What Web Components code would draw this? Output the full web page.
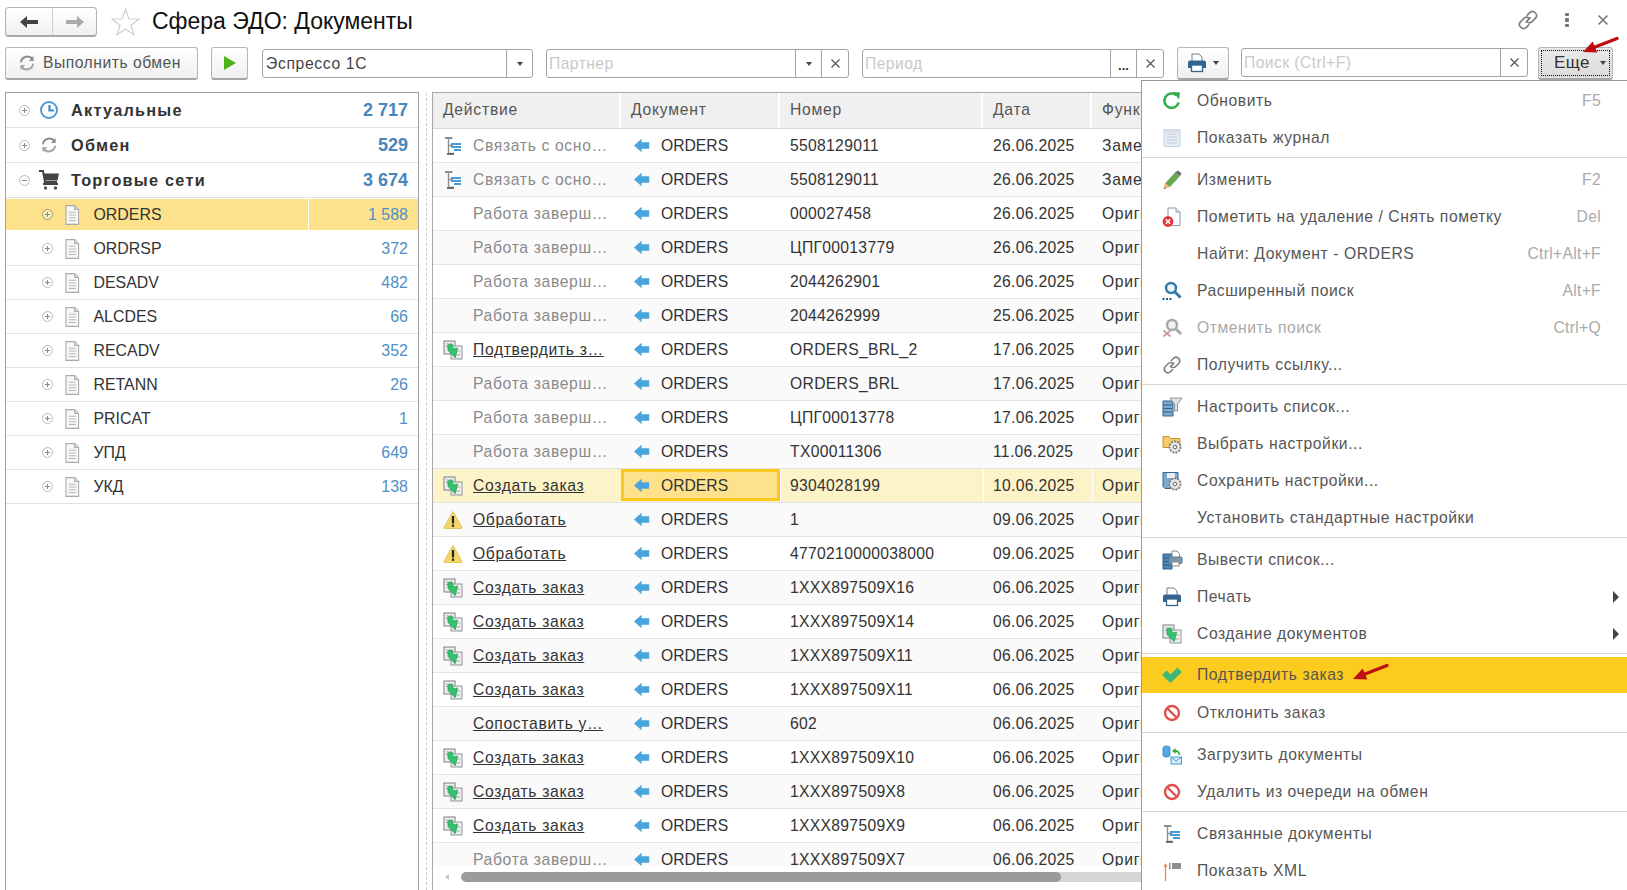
<!DOCTYPE html>
<html lang="ru"><head><meta charset="utf-8"><title>Сфера ЭДО: Документы</title>
<style>
html,body{margin:0;padding:0;background:#fff;font-family:"Liberation Sans",Arial,sans-serif;}
</style></head><body>
<edo-app></edo-app>
<script>
const S='fill="none" stroke-linecap="round" stroke-linejoin="round"';
const gear=(cx,cy)=>`<circle cx="${cx}" cy="${cy}" r="5.6" fill="#e8e8e8" stroke="#7d7d7d" stroke-width="1.8" stroke-dasharray="2 1.1"/><circle cx="${cx}" cy="${cy}" r="1.8" fill="#fff" stroke="#666" stroke-width="1"/>`;
const I={
clock:`<circle cx="10" cy="10" r="8" fill="#fff" stroke="#4d9ad6" stroke-width="2"/><path d="M10.5 5v5.5H15" fill="none" stroke="#3d8bcb" stroke-width="2.2"/>`,
sync:`<path d="M4 8.5A6.6 6.6 0 0 1 15.5 6" ${S} stroke="#8b8b8b" stroke-width="2"/><path d="M16.5 3v5h-4.6z" fill="#8b8b8b"/><path d="M16 11.5A6.6 6.6 0 0 1 4.5 14" ${S} stroke="#a5a5a5" stroke-width="2"/><path d="M3.5 17v-5h4.6z" fill="#a5a5a5"/>`,
cart:`<path d="M0 1h4l2 11h12" fill="none" stroke="#444" stroke-width="2"/><path d="M4.5 3.5H20l-1.500 7H6z" fill="#444"/><rect x="4" y="13" width="15" height="2" fill="#444"/><circle cx="6.500" cy="18" r="1.700" fill="#555"/><circle cx="16.500" cy="18" r="1.700" fill="#555"/>`,
doc:`<path d="M4.500 1.500h8l3.500 3.500v13.500H4.500z" fill="#f7f7f4" stroke="#aaa"/><path d="M12.500 1.500V5H16" fill="#ddd" stroke="#aaa"/><path d="M7 7.500h6.500M7 10h6.500M7 12.500h6.500M7 15h6.500" stroke="#b9b9b9"/>`,
tree:`<path d="M2 2h7.500" stroke="#8a8f94" stroke-width="2"/><path d="M5.500 2v15.500H11M5.500 9.500H10" fill="none" stroke="#8a8f94" stroke-width="1.400"/><path d="M8 8h10M8 11h10M11 14h7" stroke="#4a9ad6" stroke-width="2"/><path d="M4 18h7" stroke="#555" stroke-width="1.600"/>`,
left:`<path d="M0 10 8 3v3.500h8v7H8V17z" fill="#4aa5de"/>`,
create:`<rect x="1" y="1" width="11" height="13" fill="#eee" stroke="#7b7f82"/><rect x="8" y="6" width="11" height="13" fill="#eee" stroke="#8e9295"/><path d="M3 4h6M3 6.500h4M13 15h4M13 11h4" stroke="#aaa"/><path d="M6 4h4.500v5H15l-4.500 9L5 9.500z" transform="rotate(-12 10 10)" fill="#33c16b" stroke="#1f9a4f" stroke-width=".6"/>`,
warn:`<path d="M10 1.500 19 17.500a.8.8 0 0 1-.7 1H1.700a.8.8 0 0 1-.7-1z" fill="#f3d768" stroke="#e2c65a"/><rect x="8.900" y="6" width="2.200" height="7.500" fill="#222"/><rect x="8.900" y="14.600" width="2.200" height="2.200" fill="#222"/>`,
refresh:`<path d="M16.600 11.500A7.200 7.200 0 1 1 14.400 4.300" fill="none" stroke="#2fae4a" stroke-width="2.600"/><path d="M11 .8 18 1.500 17 8.400z" fill="#2fae4a"/>`,
journal:`<rect x="2" y="1.500" width="16" height="17" fill="#e6ecf3" stroke="#c5d0dc"/><path d="M5 6h10M5 9h10M5 12h10M5 15h10" stroke="#c0ccd8"/><rect x="2" y="1.500" width="16" height="3" fill="#d6dfe9"/>`,
pencil:`<path d="M13 2.500 18 6 8 17 3 13.500z" fill="#6aa84f"/><path d="M13 2.500 16 .6 19.600 3.600 18 6z" fill="#5e6a78"/><path d="M3 13.500 8 17 1.500 19z" fill="#f1b868"/><path d="M1.500 19 3 17.200 3.600 18.400z" fill="#333"/>`,
del:`<path d="M6 1h8l4 4v13.500H6z" fill="#fff" stroke="#8797a6"/><path d="M14 1v4h4" fill="#eef" stroke="#8797a6"/><circle cx="6" cy="14.500" r="5.400" fill="#e03a3e"/><path d="M3.800 12.300l4.400 4.400M8.200 12.300l-4.400 4.400" stroke="#fff" stroke-width="1.600"/>`,
search:`<circle cx="9" cy="7" r="5" fill="#eef5fa" stroke="#2f79ad" stroke-width="2.400"/><path d="M13 11l5.500 5.500" stroke="#2f79ad" stroke-width="3"/><path d="M.5 18h2M4 18h2M7.500 18h2" stroke="#1f5f8f" stroke-width="1.800"/>`,
cancel:`<circle cx="10" cy="7" r="5" fill="#f2f2f2" stroke="#a8a8a8" stroke-width="2.400"/><path d="M14 11l5 5" stroke="#aaa" stroke-width="3"/><path d="M1.500 12.500l7 6M8.500 12.500l-7 6" stroke="#cf9a9a" stroke-width="1.800"/>`,
link:`<path d="M8.300 11.700l3.600-3.600M9.300 5.500l2.400-2.400a3.700 3.700 0 0 1 5.200 5.200l-3 3a3.700 3.700 0 0 1-5 .2M10.700 14.500l-2.400 2.400a3.700 3.700 0 0 1-5.200-5.200l3-3a3.700 3.700 0 0 1 5-.2" ${S} stroke="#7f7f7f" stroke-width="1.500"/>`,
listset:`<path d="M1 4h10v15H1z" fill="#7ea9cf" stroke="#32658f"/><path d="M1 8h9M1 11.500h9M1 15h9" stroke="#32658f"/><path d="M8 1h12l-4.500 6v7h-3V7z" fill="#dfe3e6" stroke="#8c9399"/>`,
folderset:`<path d="M1 5V2.500h6l1.500 2H18v9H1z" fill="#f5cd6a" stroke="#c98f2e"/>${gear(13,13)}`,
saveset:`<path d="M1 1.500h15v16H3l-2-2z" fill="#7ea9cf" stroke="#32658f"/><rect x="5" y="2" width="8" height="5" fill="#e8eef5"/>${gear(13,13)}`,
printlist:`<path d="M1 4h9v15H1z" fill="#4f86b3" stroke="#2d5f89"/><path d="M1 8h9M1 11.500h9M1 15h9" stroke="#2d5f89"/><path d="M10 1h5l2.500 2.500V8H10z" fill="#fff" stroke="#888"/><rect x="7" y="7" width="13" height="6.500" rx="1" fill="#7c96ad" stroke="#5e7891"/><rect x="10" y="12" width="7" height="4" fill="#fff" stroke="#888"/>`,
printer:`<path d="M5 1h7l3 3v5H5z" fill="#fff" stroke="#6f7f8e"/><path d="M1 9.500a2 2 0 0 1 2-2h14a2 2 0 0 1 2 2V15h-3v-2H4v2H1z" fill="#33658f"/><rect x="4.500" y="12" width="11" height="6.500" fill="#fff" stroke="#33658f" stroke-width="1.300"/>`,
check:`<path d="M0 10 4.500 5.500 8.500 9.500 15.500 2.500 20 7 8.500 18z" fill="#3cb878"/>`,
ban:`<circle cx="10" cy="10" r="7" fill="none" stroke="#e2524b" stroke-width="2.400"/><path d="M5 5l10 10" stroke="#e2524b" stroke-width="2.400"/>`,
load:`<path d="M1 3a3.500 2 0 0 1 7 0v7a3.500 2 0 0 1-7 0z" fill="#57a9e3" stroke="#2f7fb8" stroke-width=".8"/><path d="M13.500 3 10 6l3.500 3V7c2 0 3 1 3 3h1.500c0-3-1.500-5-4.500-5z" fill="#33a83e"/><rect x="9" y="12" width="10.500" height="7" fill="#d6ecfa" stroke="#4a9ad6"/><path d="M9 12l5.200 4 5.300-4" fill="none" stroke="#4a9ad6"/>`,
xml:`<path d="M3.500 20V4" stroke="#e2895a" stroke-width="1.300"/><path d="M1.500 6 3.500 2l2 4z" fill="#e2895a"/><path d="M7 3h1.500M10 3h9M7 5h1.500M10 5h9M7 7h1.500M10 7h9" stroke="#222" stroke-width="1.200"/>`
};
function el(name,cls){customElements.define(name,cls);}
class Base extends HTMLElement{
  constructor(){super();this.attachShadow({mode:'open'});}
  a(n,d=''){return this.hasAttribute(n)?this.getAttribute(n):d;}
}
el('edo-icon',class extends Base{connectedCallback(){const s=this.a('size','20');
  this.shadowRoot.innerHTML=`<style>:host{display:inline-flex;width:${s}px;height:${s}px;flex:none}svg{display:block;width:100%;height:100%;overflow:visible}</style><svg viewBox="0 0 20 20" aria-hidden="true">${I[this.a('name')]||''}</svg>`;}});

el('edo-header',class extends Base{connectedCallback(){this.shadowRoot.innerHTML=`<style>
:host{display:flex;align-items:flex-start;height:47px;box-sizing:border-box;padding:7px 0 0 5px}
.nav{display:flex;width:92px;height:30px;box-sizing:border-box;border:1px solid #b4b4b4;border-bottom:2px solid #a8a8a8;border-radius:4px;background:linear-gradient(#fff,#f0f0f0)}
.nav div{flex:1;display:flex;align-items:center;justify-content:center}
.nav div:first-child{border-right:1px solid #cfcfcf;flex:0 0 46px}
.star{margin:1px 0 0 14px;width:29px;height:28px}
h1{margin:0 0 0 12px;font:400 23px/28px "Liberation Sans",Arial,sans-serif;color:#111;white-space:nowrap}
.sp{flex:1}
.r{display:flex;align-items:center;height:26px;margin-right:18px}
.r>*{display:block}
.dots{margin:0 28px 0 26px;width:4px;display:flex;flex-direction:column;gap:2px}
.dots i{width:4px;height:3.500px;background:#777;border-radius:1px}
</style>
<div class="nav"><div><svg width="18" height="14" viewBox="0 0 18 14"><path d="M0 7 7 1v4h11v4H7v4z" fill="#444"/></svg></div><div><svg width="18" height="14" viewBox="0 0 18 14"><path d="M18 7 11 1v4H0v4h11v4z" fill="#aaa"/></svg></div></div>
<svg class="star" viewBox="0 0 29 28"><path d="M14.500 1.500 18 11h10l-8 6.200 3 9.600-8.500-5.800L6 26.800l3-9.600L1 11h10z" fill="#fff" stroke="#cfcfcf" stroke-width="1.200"/></svg>
<h1><slot></slot></h1><div class="sp"></div>
<div class="r"><edo-icon name="link" size="22"></edo-icon><div class="dots"><i></i><i></i><i></i></div>
<svg width="12" height="12" viewBox="0 0 12 12"><path d="M1.500 1.500l9 9M10.500 1.500l-9 9" stroke="#7a7a7a" stroke-width="1.700"/></svg></div>`;}});

el('edo-button',class extends Base{connectedCallback(){const w=this.a('w'),f=this.hasAttribute('pressed'),st=this.hasAttribute('start');this.shadowRoot.innerHTML=`<style>
:host{display:inline-flex;flex:none;width:${w}px;height:33px;box-sizing:border-box;border:1px solid #b6b6b6;border-bottom:2px solid #a6a6a6;border-radius:3px;background:${f?'linear-gradient(#e9e9e9,#dcdcdc)':'linear-gradient(#fff,#efefef)'};align-items:center;justify-content:${st?'flex-start':'center'};${st?'padding-left:11px;':''}gap:6px;color:#555;font:15.700px "Liberation Sans",Arial,sans-serif;letter-spacing:.5px;white-space:nowrap}
.d{box-sizing:border-box;margin:2px;align-self:stretch;flex:1;border:1px dotted #111;display:flex;align-items:center;justify-content:center;gap:10px;font-size:17px;color:#333;padding-left:9px}
</style>${f?'<div class="d"><slot></slot></div>':'<slot></slot>'}`;}});

el('edo-drop',class extends Base{connectedCallback(){this.shadowRoot.innerHTML=`<style>:host{display:inline-block;width:0;height:0;border:3.500px solid transparent;border-top:4px solid ${this.a('c','#444')};border-bottom:0;flex:none}</style>`;}});

el('edo-field',class extends Base{connectedCallback(){const w=this.a('w'),b=this.a('btn','').split(' ').filter(Boolean),h=this.a('h','29'),ph=this.hasAttribute('ph');
 const bs=b.map(x=>{const n=x.split(':');
   const inner=n[0]=='drop'?'<edo-drop></edo-drop>':n[0]=='dots'?'<span class="dots">...</span>':'<svg width="11" height="11" viewBox="0 0 11 11"><path d="M1.500 1.500l8 8M9.500 1.500l-8 8" stroke="#555" stroke-width="1.200"/></svg>';
   return `<div class="b" style="width:${n[1]}px">${inner}</div>`}).join('');
 this.shadowRoot.innerHTML=`<style>
:host{display:inline-flex;flex:none;width:${w}px;height:${h}px;box-sizing:border-box;border:1px solid #a3a3a3;border-radius:3px;background:#fff;font:15.700px "Liberation Sans",Arial,sans-serif;letter-spacing:${ph?'.42px':'.65px'};color:${ph?'#c9c9c9':'#444'}}
.t{flex:1;padding-left:${ph?2:3}px;padding-top:1px;line-height:${h-3}px;white-space:nowrap;overflow:hidden}
.b{flex:none;box-sizing:border-box;border-left:1px solid #a3a3a3;display:flex;align-items:center;justify-content:center}
.dots{color:#333;font-weight:700;font-size:13px;margin-top:3px;letter-spacing:0}
</style><div class="t"><slot></slot></div>${bs}`;}});

el('edo-toolbar',class extends Base{connectedCallback(){this.shadowRoot.innerHTML=`<style>
:host{display:flex;align-items:center;height:33px;padding-left:5px}
slot{display:contents}
</style><slot></slot>`;}});

el('edo-tree-row',class extends Base{connectedCallback(){const top=this.a('level')=='0',sel=this.hasAttribute('selected'),open=this.hasAttribute('open');
 this.shadowRoot.innerHTML=`<style>
:host{display:flex;align-items:center;box-sizing:border-box;height:${sel?33:top?35:34}px;border-bottom:1px solid #e2e2e2;color:#333;font-family:"Liberation Sans",Arial,sans-serif;${sel?'background:#fde28b;border-bottom:2px solid #fff;margin-top:1px;':''}}
.e{width:11px;height:11px;box-sizing:border-box;border:1px solid #bbb;border-radius:50%;margin-left:${top?13:36}px;position:relative;flex:none;${sel?'border-color:#a89a60;background:#f6ecc8;':''}}
.e:before{content:"";position:absolute;left:2px;right:2px;top:4px;height:1px;background:#888}
.e.p:after{content:"";position:absolute;top:2px;bottom:2px;left:4px;width:1px;background:#888}
edo-icon{margin-left:${top?9:8}px}
.l{flex:1;white-space:nowrap;margin-left:${top?12:10.5}px;${top?'font-weight:700;font-size:16.300px;letter-spacing:1.250px;':'font-size:15.900px;'}}
.n{color:${top?'#4a85bd':'#4f8fc9'};height:100%;display:flex;align-items:center;justify-content:flex-end;padding-right:10px;${top?'font-weight:700;font-size:18px;':'font-size:16px;'}${sel?'width:110px;box-sizing:border-box;border-left:1px solid #fff;':''}}
</style><div class="e ${open?'':'p'}"></div><edo-icon name="${this.a('icon')}" size="${top?20:22}"></edo-icon><div class="l"><slot></slot></div><div class="n">${this.a('count')}</div>`;}});

el('edo-tree',class extends Base{connectedCallback(){this.shadowRoot.innerHTML=`<style>
:host{display:block;flex:none;width:414px;box-sizing:border-box;border:1px solid #a0a0a0;border-bottom:0;background:#fff;margin-top:-1px}
</style><slot></slot>`;}});

const COLS='188px 159px 203px 109px 300px';
el('edo-row',class extends Base{connectedCallback(){const k=this.a('kind'),sel=this.hasAttribute('selected'),alt=this.hasAttribute('alt');
 const ic=this.a('icon');
 this.shadowRoot.innerHTML=`<style>
:host{display:grid;grid-template-columns:${COLS};height:34px;box-sizing:border-box;border-bottom:1px solid #e4e4e4;background:${sel?'#fdf3c8':alt?'#fafafa':'#fff'};font:15.700px/33px "Liberation Sans",Arial,sans-serif;color:#333}
.c{white-space:nowrap;overflow:hidden;padding-left:10px;box-sizing:border-box;${sel?'box-shadow:inset 1px 0 #fff;':''}}
.a{display:flex;padding-left:10px;align-items:center;box-shadow:none}
.a span{margin-left:10px;letter-spacing:.65px;${k=='link'?'color:#333;text-decoration:underline;':'color:#8a8a8a;'}}
.a edo-icon{visibility:${ic?'visible':'hidden'}}
.d{display:flex;align-items:center;gap:8px;padding-left:13px;${sel?'background:#fde28b;box-sizing:border-box;border:3px solid #fcc81e;padding-left:10px;margin:0 0 1px 0;height:32px;box-shadow:none;':''}}
.n{letter-spacing:.3px}
.f{letter-spacing:.65px}
</style><div class="c a"><edo-icon name="${ic||'warn'}" size="20"></edo-icon><span>${this.a('action')}</span></div><div class="c d"><edo-icon name="left" size="19"></edo-icon><div>ORDERS</div></div><div class="c n">${this.a('num')}</div><div class="c n">${this.a('date')}</div><div class="c f">${this.a('fn')}</div>`;}});

const W='Работа заверш…',Z='Создать заказ',O='Обработать',D26='26.06.2025',D06='06.06.2025',D17='17.06.2025';
const rows=[
['Связать с осно…','g','tree','5508129011',D26,'Замена'],['Связать с осно…','g','tree','5508129011',D26,'Замена'],
[W,'g','','000027458',D26],[W,'g','','ЦПГ00013779',D26],[W,'g','','2044262901',D26],[W,'g','','2044262999','25.06.2025'],
['Подтвердить з…','link','create','ORDERS_BRL_2',D17],[W,'g','','ORDERS_BRL',D17],[W,'g','','ЦПГ00013778',D17],[W,'g','','ТХ00011306','11.06.2025'],
[Z,'link','create','9304028199','10.06.2025','Оригинал',1],[O,'link','warn','1','09.06.2025'],[O,'link','warn','4770210000038000','09.06.2025'],
[Z,'link','create','1XXX897509X16',D06],[Z,'link','create','1XXX897509X14',D06],[Z,'link','create','1XXX897509X11',D06],[Z,'link','create','1XXX897509X11',D06],
['Сопоставить у…','link','','602',D06],[Z,'link','create','1XXX897509X10',D06],[Z,'link','create','1XXX897509X8',D06],[Z,'link','create','1XXX897509X9',D06],[W,'g','','1XXX897509X7',D06]];
el('edo-table',class extends Base{connectedCallback(){
 this.shadowRoot.innerHTML=`<style>
:host{display:flex;flex-direction:column;flex:1;min-width:0;box-sizing:border-box;border-left:1px solid #a8a8a8;border-top:1px solid #a8a8a8;overflow:hidden;background:#fff;font-family:"Liberation Sans",Arial,sans-serif;margin-top:-1px}
.h{display:grid;grid-template-columns:${COLS};height:36px;flex:none;box-sizing:border-box;border-bottom:1px solid #d8d8d8;width:959px;font-size:15.700px;letter-spacing:.75px;color:#555}
.h div{background:#f0f0f0;border-right:2px solid #fff;padding-left:10px;line-height:33px;white-space:nowrap;overflow:hidden}
.b{height:737px;overflow:hidden;flex:none;width:959px}
.s{flex:1;display:flex;align-items:center;padding-left:12px;gap:12px;padding-bottom:3px}
.s i{width:0;height:0;border:3px solid transparent;border-right:4px solid #c4c4c4;border-left:0;flex:none}
.tr{flex:1;height:10px;border-radius:5px;background:#d6d6d6;overflow:hidden}
.th{width:600px;height:10px;border-radius:5px;background:#9b9b9b}
</style><div class="h"><div>Действие</div><div>Документ</div><div>Номер</div><div>Дата</div><div>Функция</div></div>
<div class="b">${rows.map((r,i)=>`<edo-row kind="${r[1]}" action="${r[0]}" icon="${r[2]}" num="${r[3]}" date="${r[4]}" fn="${r[5]||'Оригинал'}"${i%2?' alt':''}${r[6]?' selected':''}></edo-row>`).join('')}</div>
<div class="s"><i></i><div class="tr"><div class="th"></div></div></div>`;}});

el('edo-menu-item',class extends Base{connectedCallback(){const dis=this.hasAttribute('disabled'),hi=this.hasAttribute('hi'),sub=this.hasAttribute('sub'),ic=this.a('icon');
 this.shadowRoot.innerHTML=`<style>
:host{display:flex;align-items:center;height:${hi?36:37}px;flex:none;${hi?'margin-bottom:1px;':''}background:${hi?'#fbcb1f':'transparent'};color:${dis?'#a9a9a9':'#555'};font:15.700px "Liberation Sans",Arial,sans-serif;white-space:nowrap}
.i{width:20px;height:20px;margin-left:20px;flex:none}
.t{margin-left:15px;flex:1;letter-spacing:.55px}
.k{color:#aaa;margin-right:26px;letter-spacing:.3px}
.a{width:0;height:0;border:6px solid transparent;border-left:6px solid #444;border-right:0;margin-right:8px}
</style><div class="i">${ic?`<edo-icon name="${ic}" size="20"></edo-icon>`:''}</div><div class="t"><slot></slot></div>${this.a('key')?`<div class="k">${this.a('key')}</div>`:''}${sub?'<div class="a"></div>':''}`;}});
el('edo-menu-sep',class extends Base{connectedCallback(){this.shadowRoot.innerHTML=`<style>:host{display:block;height:1px;margin:1px 0 3px;background:#d9d6cb;flex:none}</style>`;}});
el('edo-menu',class extends Base{connectedCallback(){this.shadowRoot.innerHTML=`<style>
:host{position:absolute;left:1141px;top:80px;width:486px;height:810px;box-sizing:border-box;background:#fff;border-left:1px solid #9a9a9a;border-top:1px solid #9a9a9a;display:flex;flex-direction:column;overflow:hidden;padding-top:1px}
</style><slot></slot>`;}});
el('edo-arrow',class extends Base{connectedCallback(){this.shadowRoot.innerHTML=`<style>:host{position:absolute;left:${this.a('x')}px;top:${this.a('y')}px;width:40px;height:20px;display:block}svg{display:block}</style><svg width="40" height="20" viewBox="0 0 40 20"><path d="M2 16 11.700 5.400 16.300 16.600z" fill="#c00d12"/><path d="M14 11 36 2.500" stroke="#c00d12" stroke-width="3.400" stroke-linecap="round"/></svg>`;}});

el('edo-app',class extends Base{connectedCallback(){this.shadowRoot.innerHTML=`<style>
:host{display:flex;flex-direction:column;position:relative;width:1627px;height:890px;overflow:hidden;background:#fff}
.w{display:flex;flex:1;min-height:0;margin-top:13px;padding-left:5px}
.sp{flex:none;width:13px;position:relative}
.sp:before{content:"";display:block;margin-left:7px;width:0;height:100%;border-left:1px dashed #cfcfcf}
edo-field,edo-button{vertical-align:top}
.ml14{margin-left:14px}
.ml13{margin-left:13px}
</style>
<edo-header>Сфера ЭДО: Документы</edo-header>
<edo-toolbar>
 <edo-button w="193" start><edo-icon name="sync" size="20"></edo-icon>Выполнить обмен</edo-button>
 <edo-button w="37" class="ml13"><svg width="14" height="16" viewBox="0 0 14 16"><path d="M1 1 13 8 1 15z" fill="#4cb217"/></svg></edo-button>
 <edo-field w="271" class="ml14" btn="drop:26">Эспрессо 1С</edo-field>
 <edo-field w="303" class="ml13" ph btn="drop:26 x:27">Партнер</edo-field>
 <edo-field w="302" class="ml13" ph btn="dots:26 x:27">Период</edo-field>
 <edo-button w="52" class="ml13"><edo-icon name="printer" size="20"></edo-icon><edo-drop></edo-drop></edo-button>
 <edo-field w="287" h="29" style="margin-left:12px;margin-top:-2px" ph btn="x:27">Поиск (Ctrl+F)</edo-field>
 <edo-button w="75" pressed style="margin-left:10px">Еще<edo-drop></edo-drop></edo-button>
</edo-toolbar>
<div class="w">
 <edo-tree>
  <edo-tree-row level="0" icon="clock" count="2 717">Актуальные</edo-tree-row>
  <edo-tree-row level="0" icon="sync" count="529">Обмен</edo-tree-row>
  <edo-tree-row level="0" icon="cart" count="3 674" open>Торговые сети</edo-tree-row>
  <edo-tree-row level="1" icon="doc" count="1 588" selected>ORDERS</edo-tree-row>
  <edo-tree-row level="1" icon="doc" count="372">ORDRSP</edo-tree-row>
  <edo-tree-row level="1" icon="doc" count="482">DESADV</edo-tree-row>
  <edo-tree-row level="1" icon="doc" count="66">ALCDES</edo-tree-row>
  <edo-tree-row level="1" icon="doc" count="352">RECADV</edo-tree-row>
  <edo-tree-row level="1" icon="doc" count="26">RETANN</edo-tree-row>
  <edo-tree-row level="1" icon="doc" count="1">PRICAT</edo-tree-row>
  <edo-tree-row level="1" icon="doc" count="649">УПД</edo-tree-row>
  <edo-tree-row level="1" icon="doc" count="138">УКД</edo-tree-row>
 </edo-tree>
 <div class="sp"></div>
 <edo-table></edo-table>
</div>
<edo-menu>
 <edo-menu-item icon="refresh" key="F5">Обновить</edo-menu-item>
 <edo-menu-item icon="journal">Показать журнал</edo-menu-item>
 <edo-menu-sep></edo-menu-sep>
 <edo-menu-item icon="pencil" key="F2">Изменить</edo-menu-item>
 <edo-menu-item icon="del" key="Del">Пометить на удаление / Снять пометку</edo-menu-item>
 <edo-menu-item key="Ctrl+Alt+F">Найти: Документ - ORDERS</edo-menu-item>
 <edo-menu-item icon="search" key="Alt+F">Расширенный поиск</edo-menu-item>
 <edo-menu-item icon="cancel" key="Ctrl+Q" disabled>Отменить поиск</edo-menu-item>
 <edo-menu-item icon="link">Получить ссылку...</edo-menu-item>
 <edo-menu-sep></edo-menu-sep>
 <edo-menu-item icon="listset">Настроить список...</edo-menu-item>
 <edo-menu-item icon="folderset">Выбрать настройки...</edo-menu-item>
 <edo-menu-item icon="saveset">Сохранить настройки...</edo-menu-item>
 <edo-menu-item>Установить стандартные настройки</edo-menu-item>
 <edo-menu-sep></edo-menu-sep>
 <edo-menu-item icon="printlist">Вывести список...</edo-menu-item>
 <edo-menu-item icon="printer" sub>Печать</edo-menu-item>
 <edo-menu-item icon="create" sub>Создание документов</edo-menu-item>
 <edo-menu-sep></edo-menu-sep>
 <edo-menu-item icon="check" hi>Подтвердить заказ</edo-menu-item>
 <edo-menu-item icon="ban">Отклонить заказ</edo-menu-item>
 <edo-menu-sep></edo-menu-sep>
 <edo-menu-item icon="load">Загрузить документы</edo-menu-item>
 <edo-menu-item icon="ban">Удалить из очереди на обмен</edo-menu-item>
 <edo-menu-sep></edo-menu-sep>
 <edo-menu-item icon="tree">Связанные документы</edo-menu-item>
 <edo-menu-item icon="xml">Показать XML</edo-menu-item>
</edo-menu>
<edo-arrow x="1581" y="36"></edo-arrow>
<edo-arrow x="1351" y="663"></edo-arrow>`;}});
</script>
</body></html>
